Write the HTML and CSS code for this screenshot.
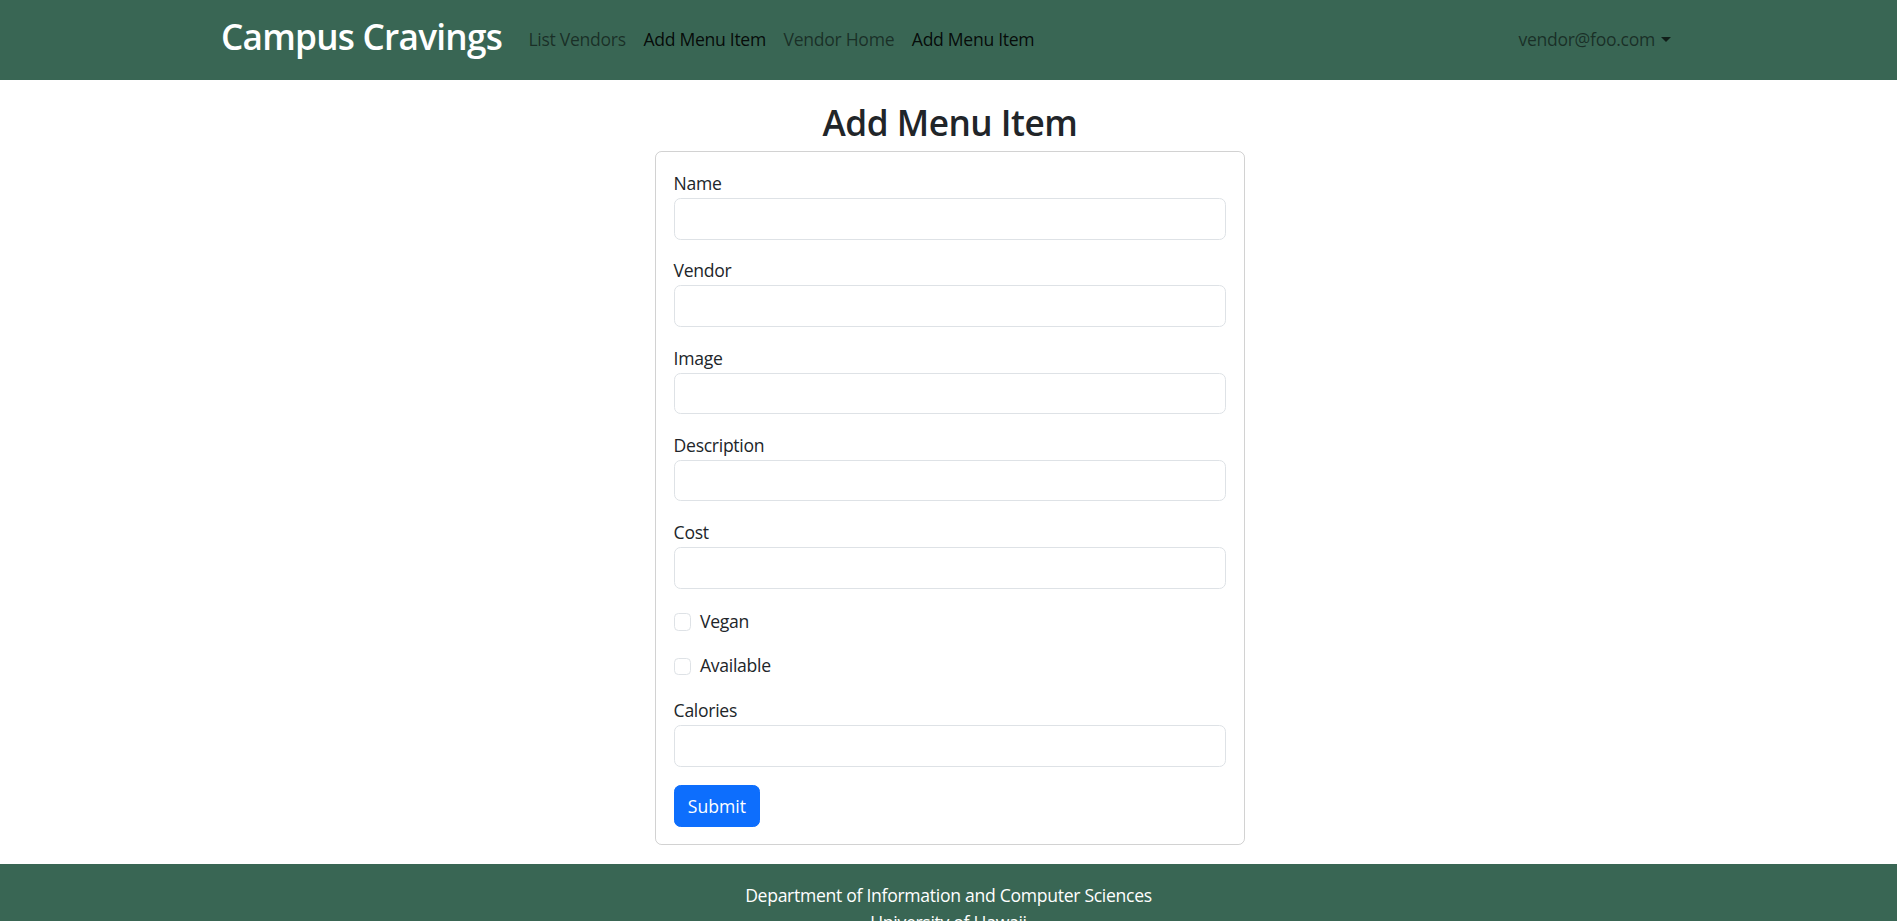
FILE: index.html
```html
<!DOCTYPE html>
<html lang="en">
<head>
<meta charset="utf-8">
<title>Campus Cravings</title>
<link rel="stylesheet" href="styles.css">
</head>
<body>
<nav class="navbar">
  <div class="navbar-inner">
    <a class="brand" href="#">Campus Cravings</a>
    <ul class="nav-links">
      <li><a class="nav-link" href="#">List Vendors</a></li>
      <li><a class="nav-link active" href="#">Add Menu Item</a></li>
      <li><a class="nav-link" href="#">Vendor Home</a></li>
      <li><a class="nav-link active" href="#">Add Menu Item</a></li>
    </ul>
    <div class="user">vendor@foo.com<span class="caret"></span></div>
  </div>
</nav>
<main class="page">
  <h2 class="title">Add Menu Item</h2>
  <form class="card">
    <div class="field"><label>Name</label><input class="input" type="text"></div>
    <div class="field"><label>Vendor</label><input class="input" type="text"></div>
    <div class="field"><label>Image</label><input class="input" type="text"></div>
    <div class="field"><label>Description</label><input class="input" type="text"></div>
    <div class="field"><label>Cost</label><input class="input" type="text"></div>
    <div class="check"><span class="box"></span><label>Vegan</label></div>
    <div class="check"><span class="box"></span><label>Available</label></div>
    <div class="field field-last"><label>Calories</label><input class="input" type="text"></div>
    <button class="btn" type="button">Submit</button>
  </form>
</main>
<footer class="footer">
  <div>Department of Information and Computer Sciences</div>
  <div>University of Hawaii</div>
  <div>Honolulu, HI 96822</div>
</footer>
</body>
</html>
```
FILE: styles.css
```css
* { box-sizing: border-box; }
html { overflow: hidden; }
html, body { margin: 0; padding: 0; }
body {
  font-family: "Open Sans", "Noto Sans", sans-serif;
  font-size: 17.6px;
  line-height: 26.4px;
  letter-spacing: -0.3px;
  color: #212529;
  background: #fff;
}
.navbar { background: #396654; height: 80px; }
.navbar-inner {
  max-width: 1455px;
  margin: 0 auto;
  height: 100%;
  display: flex;
  align-items: center;
}
.brand {
  font-size: 35.2px;
  font-weight: 600;
  line-height: 52px;
  letter-spacing: -0.75px;
  color: #fff;
  text-decoration: none;
  margin-right: 17.6px;
  padding-bottom: 9px;
}
.nav-links {
  display: flex;
  list-style: none;
  margin: 0;
  padding: 0;
  flex: 1;
}
.nav-link {
  display: block;
  padding: 0 8.8px 2px;
  color: rgba(0, 0, 0, 0.55);
  text-decoration: none;
}
.nav-link.active { color: rgba(0, 0, 0, 0.9); }
.user {
  display: flex;
  align-items: center;
  padding: 0 5px 2px 8.8px;
  color: rgba(0, 0, 0, 0.55);
}
.caret {
  width: 0;
  height: 0;
  margin-left: 6px;
  border-top: 5.3px solid rgba(0, 0, 0, 0.7);
  border-left: 5px solid transparent;
  border-right: 5px solid transparent;
}
.page {
  display: flex;
  flex-direction: column;
  align-items: center;
  padding: 21px 0 18.3px;
}
.title {
  font-size: 35.2px;
  font-weight: 600;
  line-height: 42px;
  letter-spacing: -0.5px;
  margin: 0 0 8px 3px;
}
.card {
  width: 590px;
  border: 1px solid rgba(0, 0, 0, 0.175);
  border-radius: 6.6px;
  padding: 18.3px 17.6px 17.6px;
  display: flex;
  flex-direction: column;
  margin-left: 3px;
}
.field {
  display: flex;
  flex-direction: column;
  margin-bottom: 17.6px;
}
.field-last { margin-bottom: 18.6px; }
.field label { line-height: 26.4px; margin-bottom: 1.6px; }
.input {
  height: 41.6px;
  border: 1px solid #dee2e6;
  border-radius: 6.6px;
  font: inherit;
  padding: 6.6px 13.2px;
  background: #fff;
}
.check {
  display: flex;
  align-items: center;
  gap: 8.8px;
  height: 26.4px;
  margin: 0 0 18.4px;
}
.field + .check { margin-top: 1.3px; }
.box {
  width: 17.6px;
  height: 17.6px;
  border: 1px solid #dee2e6;
  border-radius: 4.4px;
  background: #fff;
  margin-top: 2px;
}
.btn {
  align-self: flex-start;
  height: 41.6px;
  padding: 0 13.2px;
  font: inherit;
  color: #fff;
  background: #0d6efd;
  border: 1px solid #0d6efd;
  border-radius: 6.6px;
}
.footer {
  background: #396654;
  color: #fff;
  text-align: center;
  padding: 18.6px 0 17.6px;
}
```
